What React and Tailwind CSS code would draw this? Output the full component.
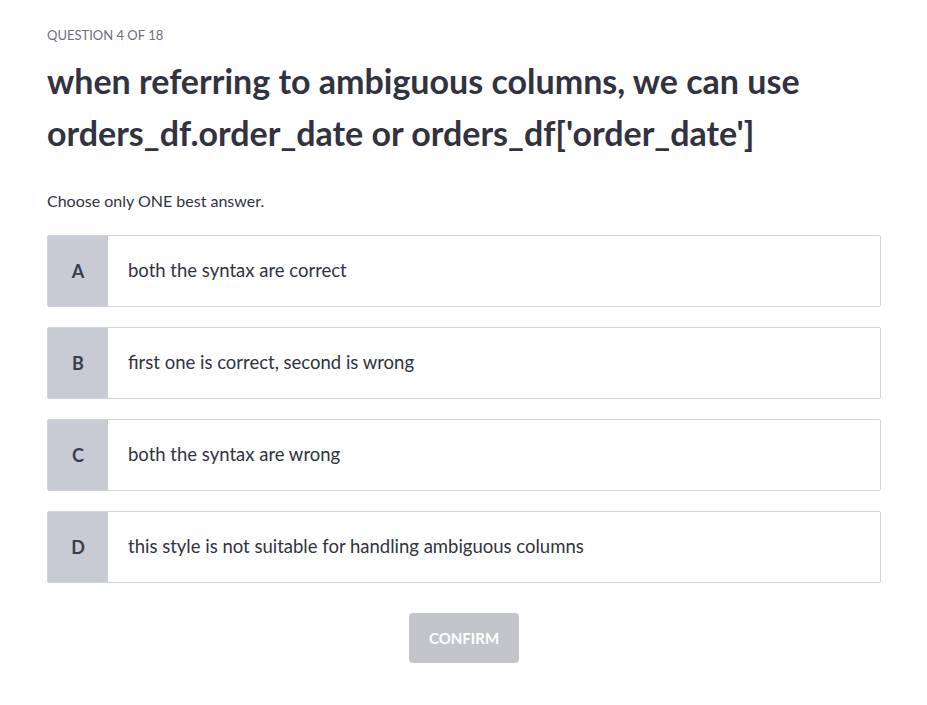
import React from 'react';

const options = [
  { key: 'A', text: 'both the syntax are correct' },
  { key: 'B', text: 'first one is correct, second is wrong' },
  { key: 'C', text: 'both the syntax are wrong' },
  { key: 'D', text: 'this style is not suitable for handling ambiguous columns' },
];

const App = () => {
  return (
    <div className="min-h-screen bg-white px-[47px] pt-[27px] text-[#31333f]" style={{ fontFamily: 'Lato, "Noto Sans", sans-serif' }}>
      <div className="w-[834px]">
        {/* Header */}
        <p className="text-[13px] leading-[16px] text-[#6c6f7e] uppercase">Question 4 of 18</p>
        <h1 className="mt-[12px] text-[34px] leading-[52px] font-bold text-[#31333f]">
          when referring to ambiguous columns, we can use orders_df.order_date or orders_df['order_date']
        </h1>
        <p className="mt-[32px] text-[16px] leading-[20px] text-[#31333f]">Choose only ONE best answer.</p>

        {/* Pilihan jawaban */}
        <div className="mt-[24px] flex flex-col gap-[20px]">
          {options.map((opt) => (
            <div key={opt.key} className="flex h-[72px] border border-[#d3d3db] rounded-[2px] overflow-hidden bg-white">
              <div className="w-[60px] flex items-center justify-center bg-[#c9cbd4] text-[18px] font-bold text-[#3b3d4c]">
                {opt.key}
              </div>
              <div className="flex items-center pl-[20px] text-[18.5px] text-[#31333f]">{opt.text}</div>
            </div>
          ))}
        </div>

        {/* Tombol */}
        <div className="mt-[30px] flex justify-center">
          <button className="w-[110px] h-[50px] rounded-[4px] bg-[#c4c5ca] text-white text-[15px] font-bold uppercase">
            Confirm
          </button>
        </div>
      </div>
    </div>
  );
};

export default App;
